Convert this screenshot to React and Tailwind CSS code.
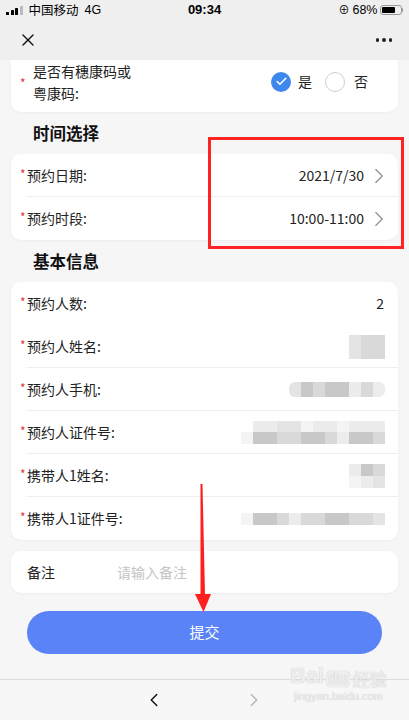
import { ChevronRight, ChevronLeft, X, Check } from 'lucide-react';

const font = { fontFamily: '"Noto Sans CJK SC", "Noto Sans", sans-serif' };

function Blur({ rows }) {
    return (
        <div className="flex flex-col items-end">
            {rows.map((row, i) => (
                <div key={i} className="flex">
                    {row.map((c, j) => (
                        <div key={j} className="w-3 h-3" style={{ background: c }} />
                    ))}
                </div>
            ))}
        </div>
    );
}

function Row({ label, children, divider = true, chevron }) {
    return (
        <div className="h-[43px] flex items-center pl-[9px] pr-[13px] relative">
            <span className="text-[#e0383b] text-[12px] w-[7px] mt-[-3px]">*</span>
            <span className="text-[14px] text-[#222]">{label}</span>
            <div className="flex-1 flex justify-end items-center">{children}</div>
            {chevron && <ChevronRight size={26} strokeWidth={1} className="text-[#8a8a8a] ml-[2px] mr-[-7px]" />}
            {divider && <div className="absolute left-4 right-0 bottom-0 h-px bg-[#eeeeee]" />}
        </div>
    );
}

const g1 = '#ececec', g2 = '#d9d9d9', g3 = '#c8c8c8', g4 = '#e4e4e4', g5 = '#f4f4f4';

export default function App() {
    return (
        <div className="w-[409px] h-[720px] bg-[#f6f6f6] flex flex-col relative overflow-hidden" style={font}>
            {/* status bar */}
            <div className="h-5 bg-[#efefef] flex items-center px-[6px] text-[12.5px] text-black" style={{ fontFamily: '"Liberation Sans", "Noto Sans CJK SC", sans-serif' }}>
                <div className="flex-1 flex items-center">
                    <div className="flex items-end gap-[1.5px] mr-[6px] h-[9px]">
                        <div className="w-[3px] h-[3px] bg-black rounded-[0.5px]" />
                        <div className="w-[3px] h-[5px] bg-black rounded-[0.5px]" />
                        <div className="w-[3px] h-[7px] bg-black rounded-[0.5px]" />
                        <div className="w-[3px] h-[9px] bg-[#bbb] rounded-[0.5px]" />
                    </div>
                    <span style={font}>中国移动</span>
                    <span className="ml-[6px]">4G</span>
                </div>
                <div className="text-center font-bold text-[13px]">09:34</div>
                <div className="flex-1 flex items-center justify-end">
                    <span className="text-[11px] mr-[3px]">⊕</span>
                    <span>68%</span>
                    <div className="ml-[2px] w-[22px] h-[10px] border border-[#999] rounded-[3px] p-[1px] flex">
                        <div className="w-[13px] h-full bg-black rounded-[1px]" />
                    </div>
                    <div className="w-[1.5px] h-[4px] bg-[#999] rounded-r" />
                </div>
            </div>
            {/* nav bar */}
            <div className="h-10 bg-[#efefef] flex items-center justify-between pl-[18px] pr-[17px] z-10">
                <X size={20} strokeWidth={1.6} className="text-[#111]" />
                <div className="flex gap-[3px]">
                    <div className="w-[3.5px] h-[3.5px] rounded-full bg-[#222]" />
                    <div className="w-[3.5px] h-[3.5px] rounded-full bg-[#222]" />
                    <div className="w-[3.5px] h-[3.5px] rounded-full bg-[#222]" />
                </div>
            </div>
            {/* content, scrolled */}
            <div className="flex-1 overflow-hidden px-[11px]">
                <div className="mt-[-14px]">
                    <div className="bg-white rounded-[10px] shadow-[0_1px_3px_rgba(0,0,0,0.04)] flex items-center pl-[9px] pr-[30px] pt-[14px] pb-[8px]">
                        <span className="text-[#e0383b] text-[12px] w-[13px] mt-[2px]">*</span>
                        <div className="text-[14px] text-[#222] leading-[22px] flex-1">
                            是否有穗康码或<br />粤康码:
                        </div>
                        <div className="flex items-center mt-[-1px]">
                            <div className="w-5 h-5 rounded-full bg-[#3d87ee] flex items-center justify-center">
                                <Check size={13} strokeWidth={3} className="text-white" />
                            </div>
                            <span className="text-[14px] text-[#222] ml-[7px]">是</span>
                            <div className="w-5 h-5 rounded-full border border-[#cfcfcf] ml-[13px]" />
                            <span className="text-[14px] text-[#222] ml-[9px]">否</span>
                        </div>
                    </div>

                    <div className="h-[42px] flex items-center pl-[22px] text-[16.5px] font-bold text-[#111]">时间选择</div>
                    <div className="bg-white rounded-[10px] shadow-[0_1px_3px_rgba(0,0,0,0.04)]">
                        <Row label="预约日期:" chevron>
                            <span className="text-[14px] text-[#222]">2021/7/30</span>
                        </Row>
                        <Row label="预约时段:" chevron divider={false}>
                            <span className="text-[14px] text-[#222]">10:00-11:00</span>
                        </Row>
                    </div>

                    <div className="h-[42px] flex items-center pl-[22px] text-[16.5px] font-bold text-[#111]">基本信息</div>
                    <div className="bg-white rounded-[10px] shadow-[0_1px_3px_rgba(0,0,0,0.04)]">
                        <Row label="预约人数:" divider={false}>
                            <span className="text-[14px] text-[#222] mr-[1px]">2</span>
                        </Row>
                        <Row label="预约人姓名:">
                            <Blur rows={[[g4, g2, g2], [g4, g2, g2]]} />
                        </Row>
                        <Row label="预约人手机:">
                            <div className="flex h-[15px] rounded-[6px] overflow-hidden">
                                {[g4, g3, g2, g3, g3, g1, g2, g1].map((c, i) => (
                                    <div key={i} className="w-3 h-full" style={{ background: c }} />
                                ))}
                            </div>
                        </Row>
                        <Row label="预约人证件号:">
                            <div className="flex flex-col items-end">
                                <div className="flex h-[11px]">
                                    {[g1, g1, g4, g4, g5, g1, g1, g5, g1, g1, g1].map((c, i) => (
                                        <div key={i} className="w-3 h-full" style={{ background: c }} />
                                    ))}
                                </div>
                                <div className="flex h-[12px]">
                                    {[g5, g3, g3, g2, g2, g3, g3, g2, g1, g3, g3, g2].map((c, i) => (
                                        <div key={i} className="w-3 h-full" style={{ background: c }} />
                                    ))}
                                </div>
                            </div>
                        </Row>
                        <Row label="携带人1姓名:">
                            <Blur rows={[[g1, g3, g2], [g5, g1, g4]]} />
                        </Row>
                        <Row label="携带人1证件号:" divider={false}>
                            <div className="flex h-[12px]">
                                {[g5, g3, g3, g2, g1, g2, g2, g3, g3, g2, g2, g4].map((c, i) => (
                                    <div key={i} className="w-3 h-full" style={{ background: c }} />
                                ))}
                            </div>
                        </Row>
                    </div>

                    <div className="mt-[11px] bg-white rounded-[10px] h-[42px] flex items-center pl-4 shadow-[0_1px_3px_rgba(0,0,0,0.04)]">
                        <span className="text-[14px] text-[#222] w-[90px]">备注</span>
                        <span className="text-[14px] text-[#c4c4c4]">请输入备注</span>
                    </div>

                    <div className="mt-[18px] mx-4 h-[43px] rounded-full bg-[#5b83f8] flex items-center justify-center text-white text-[15px]">
                        提交
                    </div>
                </div>
            </div>
            {/* bottom toolbar */}
            <div className="h-[41px] border-t border-[#dcdcdc] bg-[#f7f7f7] flex items-center justify-center gap-[78px] pr-[2px]">
                <ChevronLeft size={22} strokeWidth={1.6} className="text-[#111]" />
                <ChevronRight size={22} strokeWidth={1.6} className="text-[#b5b5b5]" />
            </div>

            {/* annotation: red box */}
            <div className="absolute left-[208px] top-[137px] w-[196px] h-[112px] border-[3px] border-[#ff2424]" />
            {/* annotation: red arrow */}
            <svg className="absolute left-[190px] top-[484px]" width="28" height="130" viewBox="0 0 28 130">
                <polygon points="10.5,0 12.5,0 15,110 21,110 13.5,128 5,110 10.5,110" fill="#ff1f1f" />
            </svg>
            {/* watermark */}
            <div className="absolute left-[290px] top-[665px] flex flex-col items-center text-[#ededed] leading-none" style={{ fontFamily: '"Liberation Sans", sans-serif', textShadow: '0 0 1px #bdbdbd' }}>
                <div className="flex items-end gap-[2px]">
                    <span className="text-[22px] font-bold">Bai</span>
                    <span className="text-[16px] font-bold bg-[#eeeeee] rounded-[5px] px-[2px] shadow-[0_0_1px_#bdbdbd]">du</span>
                    <span className="text-[17px] font-bold ml-[1px]" style={font}>经验</span>
                </div>
                <span className="text-[11px] mt-[4px]">jingyan.baidu.com</span>
            </div>
        </div>
    );
}
